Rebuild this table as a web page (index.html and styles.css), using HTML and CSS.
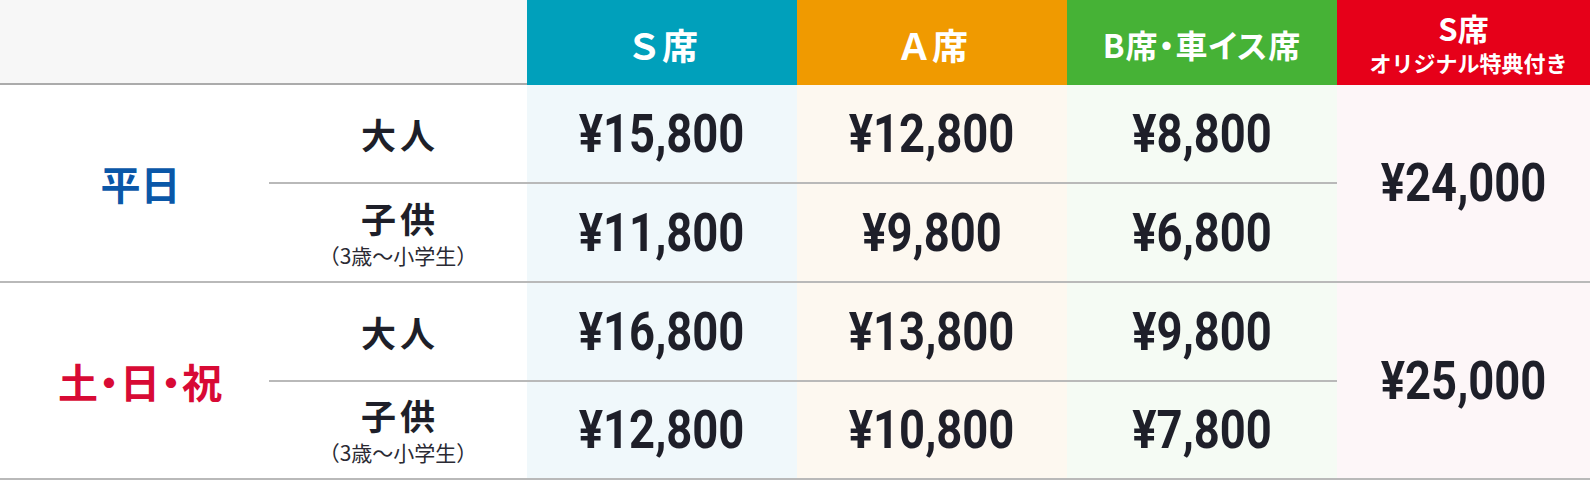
FILE: index.html
```html
<!DOCTYPE html>
<html lang="ja">
<head>
<meta charset="utf-8">
<title>料金表</title>
<link rel="stylesheet" href="styles.css">
</head>
<body>
<div class="price-table">
  <div class="hd hd-corner"></div>
  <div class="hd hd-s"><span class="hd-main">Ｓ席</span></div>
  <div class="hd hd-a"><span class="hd-main">Ａ席</span></div>
  <div class="hd hd-b"><span class="hd-main hd-b-text">B席・車イス席</span></div>
  <div class="hd hd-sp"><span class="hd-sp-main">S席</span><span class="hd-sp-sub">オリジナル特典付き</span></div>

  <div class="grp grp-weekday r2">平日</div>
  <div class="sub r2a"><span class="sub-main">大人</span></div>
  <div class="price bg-s r2a"><span class="num">¥15,800</span></div>
  <div class="price bg-a r2a"><span class="num">¥12,800</span></div>
  <div class="price bg-b r2a"><span class="num">¥8,800</span></div>
  <div class="price bg-sp grp-end r2"><span class="num">¥24,000</span></div>
  <div class="sub grp-end r2b"><span class="sub-main">子供</span><span class="sub-note">（3歳〜小学生）</span></div>
  <div class="price bg-s grp-end r2b"><span class="num">¥11,800</span></div>
  <div class="price bg-a grp-end r2b"><span class="num">¥9,800</span></div>
  <div class="price bg-b grp-end r2b"><span class="num">¥6,800</span></div>

  <div class="grp grp-holiday r4">土・日・祝</div>
  <div class="sub r4a"><span class="sub-main">大人</span></div>
  <div class="price bg-s r4a"><span class="num">¥16,800</span></div>
  <div class="price bg-a r4a"><span class="num">¥13,800</span></div>
  <div class="price bg-b r4a"><span class="num">¥9,800</span></div>
  <div class="price bg-sp grp-end r4"><span class="num">¥25,000</span></div>
  <div class="sub grp-end r4b"><span class="sub-main">子供</span><span class="sub-note">（3歳〜小学生）</span></div>
  <div class="price bg-s grp-end r4b"><span class="num">¥12,800</span></div>
  <div class="price bg-a grp-end r4b"><span class="num">¥10,800</span></div>
  <div class="price bg-b grp-end r4b"><span class="num">¥7,800</span></div>
</div>
</body>
</html>
```

FILE: styles.css
```css
html, body {
  margin: 0;
  padding: 0;
  background: #ffffff;
}

body {
  font-family: "Noto Sans CJK JP", "Noto Sans", sans-serif;
  color: #1e1f29;
}

.price-table {
  display: grid;
  width: 1590px;
  grid-template-columns: 269px 258px 270px 270px 270px 253px;
  grid-template-rows: 85px 99px 99px 99px 98px;
}

.price-table > div {
  box-sizing: border-box;
  display: flex;
  align-items: center;
  justify-content: center;
}

/* header */
.hd {
  color: #ffffff;
  font-weight: 700;
  flex-direction: column;
}
.hd-corner {
  grid-column: 1 / 3;
  background: #f7f7f7;
  border-bottom: 2px solid #ababab;
}
.hd-s { background: #00a0bb; }
.hd-a { background: #f09a00; }
.hd-b { background: #46b236; }
.hd-sp { background: #e60019; }

.hd-main {
  font-size: 36px;
  line-height: 1;
  padding-top: 2px;
}
.hd-b-text {
  font-size: 32px;
  font-feature-settings: "palt";
  letter-spacing: 1px;
}
.hd-sp-main {
  font-size: 31px;
  line-height: 1;
  margin-top: 0;
}
.hd-sp-sub {
  font-size: 22px;
  line-height: 1;
  margin-top: 8px;
  padding-left: 10px;
}

/* group labels */
.grp {
  font-weight: 700;
  font-size: 40px;
  padding-left: 12px;
  border-bottom: 2px solid #b9b9b9;
  white-space: nowrap;
}
.grp-weekday { color: #0a57a8; }
.grp-holiday {
  color: #d80a35;
  font-feature-settings: "palt";
  letter-spacing: 1px;
}

.r2 { grid-row: 2 / 4; }
.r2a { grid-row: 2; }
.r2b { grid-row: 3; }
.r4 { grid-row: 4 / 6; }
.r4a { grid-row: 4; }
.r4b { grid-row: 5; }

.grp { grid-column: 1; }
.sub { grid-column: 2; }
.bg-s { grid-column: 3; }
.bg-a { grid-column: 4; }
.bg-b { grid-column: 5; }
.bg-sp { grid-column: 6; }

/* sub labels */
.sub {
  flex-direction: column;
  border-bottom: 2px solid #b9b9b9;
}
.sub-main {
  font-weight: 700;
  font-size: 35px;
  line-height: 1;
  letter-spacing: 4px;
  padding-left: 4px;
}
.sub-note {
  font-size: 21px;
  line-height: 1;
  margin-top: 10px;
  color: #2a2a33;
}

/* prices */
.price {
  border-bottom: 2px solid #b9b9b9;
}
.bg-s { background: #f0f8fb; }
.bg-a { background: #fdf8f0; }
.bg-b { background: #f5fbf4; }
.bg-sp { background: #fdf6f8; }

.num {
  display: inline-block;
  font-family: "Roboto", "Liberation Sans", sans-serif;
  font-weight: 700;
  font-size: 54px;
  line-height: 1;
  color: #1e1f29;
  transform: scaleX(0.84);
}
```
